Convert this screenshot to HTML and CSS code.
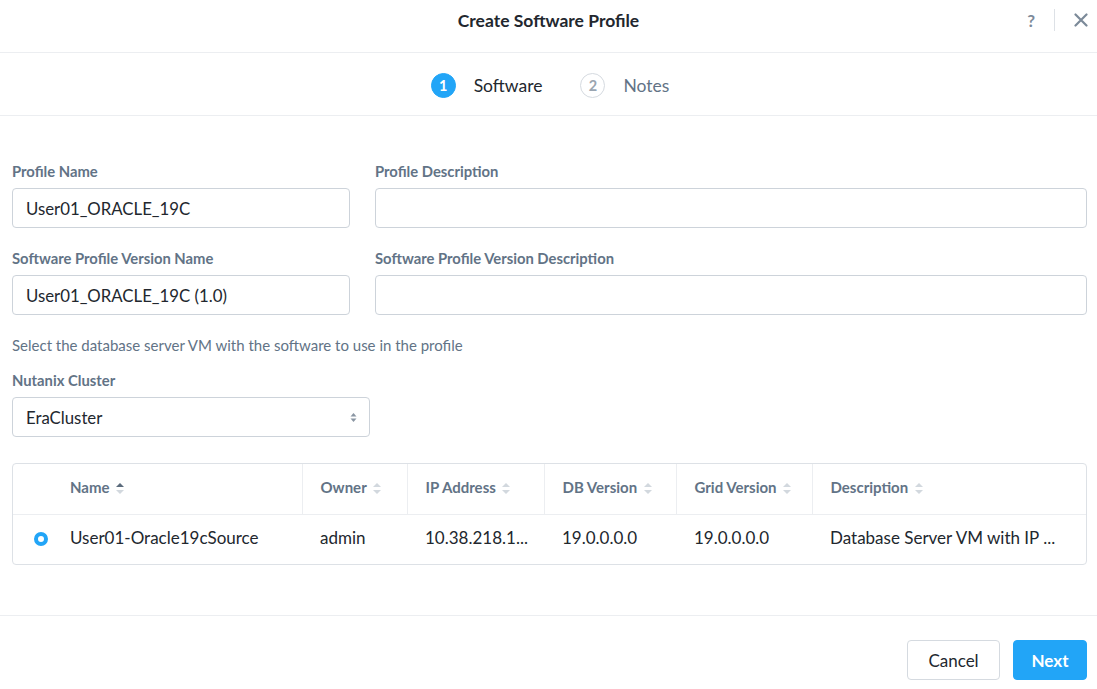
FILE: index.html
```html
<!DOCTYPE html>
<html>
<head>
<meta charset="utf-8">
<link rel="stylesheet" href="styles.css">
</head>
<body>
<div class="modal">
  <div class="header">
    <div></div>
    <div class="title">Create Software Profile</div>
    <div class="header-actions">
      <span class="help">?</span>
      <span class="sep"></span>
      <svg class="close" width="14" height="14" viewBox="0 0 14 14"><path d="M1.5 1.5L12.5 12.5M12.5 1.5L1.5 12.5" stroke="#7c8a99" stroke-width="2.2" stroke-linecap="round"/></svg>
    </div>
  </div>
  <div class="steps">
    <div class="step active"><span class="num">1</span><span class="step-label">Software</span></div>
    <div class="step"><span class="num">2</span><span class="step-label">Notes</span></div>
  </div>
  <div class="form">
    <div class="row">
      <div class="field">
        <label class="label">Profile Name</label>
        <div class="input">User01_ORACLE_19C</div>
      </div>
      <div class="field">
        <label class="label">Profile Description</label>
        <div class="input"></div>
      </div>
    </div>
    <div class="row">
      <div class="field">
        <label class="label">Software Profile Version Name</label>
        <div class="input">User01_ORACLE_19C (1.0)</div>
      </div>
      <div class="field">
        <label class="label">Software Profile Version Description</label>
        <div class="input"></div>
      </div>
    </div>
    <p class="hint">Select the database server VM with the software to use in the profile</p>
    <div class="field cluster">
      <label class="label">Nutanix Cluster</label>
      <div class="input select"><span>EraCluster</span>
        <svg width="7" height="11" viewBox="0 0 7 11"><path d="M3.5 1L6.5 4.5H0.5Z" fill="#8a96a3"/><path d="M3.5 10L6.5 6.5H0.5Z" fill="#8a96a3"/></svg>
      </div>
    </div>
    <div class="table-wrap">
      <table class="table">
        <colgroup>
          <col style="width:39px"><col style="width:250px"><col style="width:105px"><col style="width:137px"><col style="width:132px"><col style="width:136px"><col>
        </colgroup>
        <thead>
          <tr>
            <th class="radio-col"></th>
            <th class="nodiv">Name <span class="sort up"></span></th>
            <th>Owner <span class="sort"></span></th>
            <th>IP Address <span class="sort"></span></th>
            <th>DB Version <span class="sort"></span></th>
            <th>Grid Version <span class="sort"></span></th>
            <th>Description <span class="sort"></span></th>
          </tr>
        </thead>
        <tbody>
          <tr>
            <td class="radio-col"><span class="radio"></span></td>
            <td>User01-Oracle19cSource</td>
            <td>admin</td>
            <td>10.38.218.1...</td>
            <td>19.0.0.0.0</td>
            <td>19.0.0.0.0</td>
            <td>Database Server VM with IP ...</td>
          </tr>
        </tbody>
      </table>
    </div>
  </div>
  <div class="footer">
    <button class="btn cancel">Cancel</button>
    <button class="btn next">Next</button>
  </div>
</div>
</body>
</html>
```
FILE: styles.css
```css
* { box-sizing: border-box; }
html, body { margin: 0; padding: 0; background: #fff; }
body {
  font-family: "Lato", "Open Sans", "Liberation Sans", sans-serif;
  color: #22272e;
  width: 1097px;
  height: 689px;
  overflow: hidden;
}
.header {
  height: 53px;
  border-bottom: 1px solid #eceef1;
  display: grid;
  grid-template-columns: 1fr auto 1fr;
  align-items: center;
}
.title {
  font-size: 17.5px;
  font-weight: 700;
  color: #22272e;
  padding-bottom: 11px;
}
.header-actions {
  justify-self: end;
  display: flex;
  align-items: center;
  padding-right: 9px;
  padding-bottom: 12px;
}
.help { font-size: 17px; font-weight: 700; color: #7c8a99; }
.sep { width: 1px; height: 22px; background: #dde1e6; margin: 0 19px 0 19px; }
.close { display: block; }
.steps {
  height: 63px;
  border-bottom: 1px solid #eceef1;
  display: flex;
  justify-content: center;
  align-items: center;
  gap: 38px;
  padding-top: 3px;
  padding-left: 3px;
}
.step { display: flex; align-items: center; gap: 18px; font-size: 17.5px; color: #627386; }
.step .num {
  width: 25px; height: 25px; border-radius: 50%;
  border: 1.5px solid #d5dae0; color: #9aa5b1;
  display: flex; align-items: center; justify-content: center;
  font-size: 14.5px; font-weight: 700;
}
.step.active { color: #22272e; }
.step.active .num { background: #22a5f7; border-color: #22a5f7; color: #fff; }
.form { padding: 47px 10px 0 12px; }
.row { display: grid; grid-template-columns: 338px 1fr; gap: 25px; margin-bottom: 22px; }
.field { display: flex; flex-direction: column; }
.label {
  font-size: 14.8px; font-weight: 700; color: #627386;
  line-height: 17px; margin-bottom: 8px;
}
.input {
  height: 40px; border: 1px solid #cdd3da; border-radius: 4px;
  padding: 0 13px; display: flex; align-items: center;
  font-size: 16.8px; color: #22272e;
}
.hint { margin: 0 0 18px; font-size: 15px; line-height: 17px; color: #627386; }
.cluster { width: 358px; }
.select { justify-content: space-between; padding-right: 12px; }
.table-wrap {
  margin-top: 26px;
  border: 1px solid #dde1e6; border-radius: 4px;
  overflow: hidden;
}
.table { width: 100%; border-collapse: collapse; table-layout: fixed; }
.table th {
  height: 50px; text-align: left; font-size: 15px; font-weight: 700;
  color: #627386; padding: 0 18px 4px; border-left: 1px solid #eceef1;
  border-bottom: 1px solid #eceef1; white-space: nowrap;
}
.table th.radio-col, .table th.nodiv { border-left: none; }
.table td {
  height: 50px; font-size: 17px; color: #22272e; padding: 0 18px 3px;
  white-space: nowrap; overflow: hidden;
}
.table td.radio-col { padding: 0 0 1px 21px; }
.table th.radio-col { padding: 0; }
.radio {
  display: block; width: 14px; height: 14px; border-radius: 50%;
  border: 4.5px solid #22a5f7; background: #fff;
}
.sort {
  display: inline-block; width: 8px; height: 11px; vertical-align: -1px; margin-left: 3px;
  position: relative;
}
.sort::before, .sort::after {
  content: ""; position: absolute; left: 0; width: 0; height: 0;
  border-left: 4px solid transparent; border-right: 4px solid transparent;
}
.sort::before { top: 0; border-bottom: 4px solid #d2d8de; }
.sort::after { bottom: 0; border-top: 4px solid #d2d8de; }
.sort.up::before { border-bottom-color: #5b6b7c; }
.footer {
  margin-top: 50px;
  border-top: 1px solid #eceef1;
  display: flex; justify-content: flex-end; gap: 13px;
  padding: 24px 10px 0 0;
}
.btn {
  height: 40px; border-radius: 4px; font-family: inherit; font-size: 17px;
  padding: 0; cursor: pointer;
}
.cancel { width: 93px; background: #fff; border: 1px solid #d5dae0; color: #22272e; }
.next { width: 74px; background: #22a5f7; border: 1px solid #22a5f7; color: #fff; font-weight: 700; }
```
